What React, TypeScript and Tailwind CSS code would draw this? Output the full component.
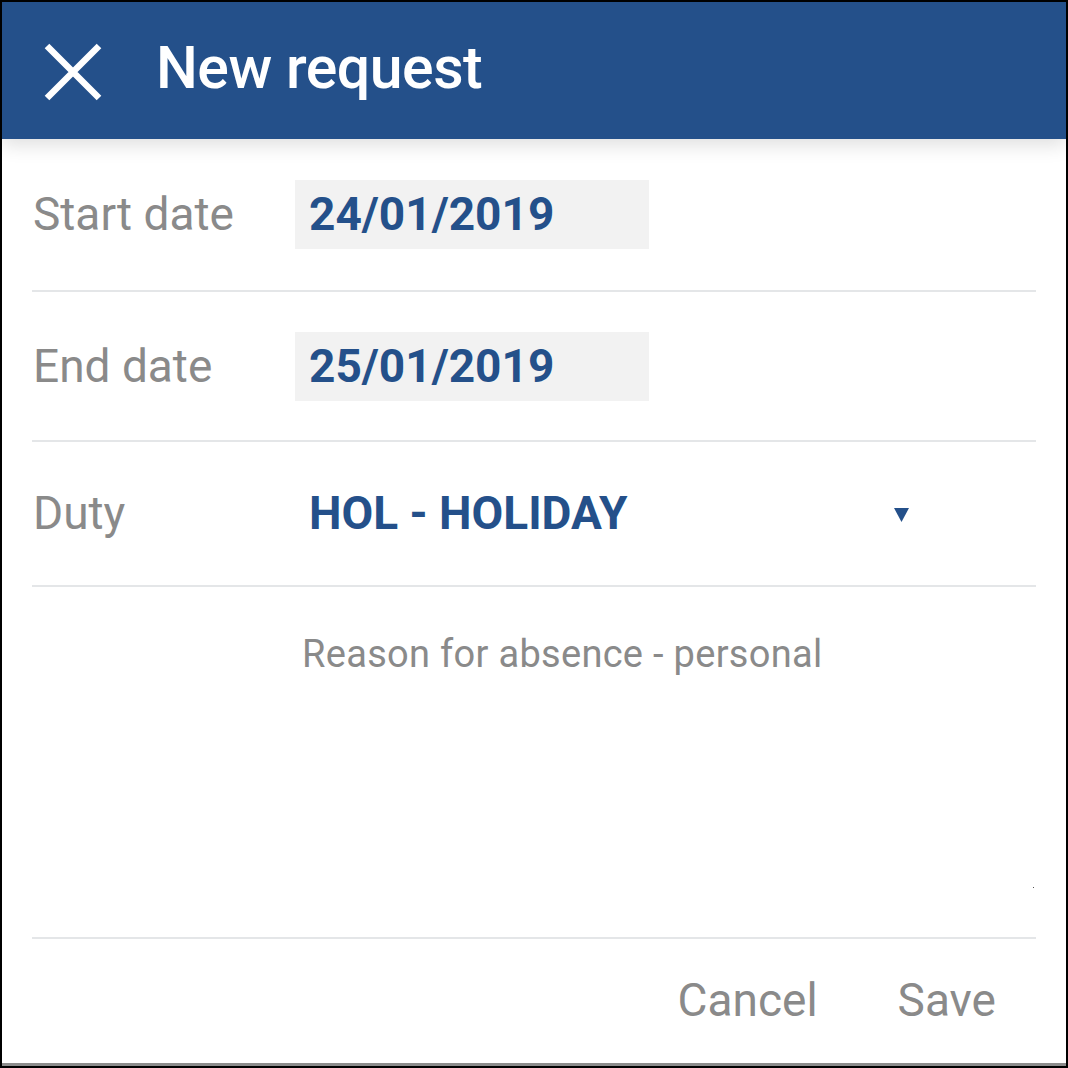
import React from "react";

const BLUE = "#24508a";

const Divider = () => <div className="h-[2px] bg-[#e4e6e8]" />;

const DateField = ({ label, value, h }: { label: string; value: string; h: string }) => (
  <div className={`flex items-center ${h}`}>
    <div className="w-[263px] pl-[1px] text-[46px] text-[#8a8a8a]">{label}</div>
    <div className="flex h-[69px] w-[354px] items-center bg-[#f2f2f2] pl-[14px] text-[46px] font-bold text-[#24508a]">
      {value}
    </div>
  </div>
);

export default function App() {
  return (
    <div
      className="relative flex h-[1068px] w-[1068px] flex-col overflow-hidden border-x-2 border-t-2 border-black bg-white"
      style={{ fontFamily: "Roboto, 'Noto Sans', sans-serif" }}
    >
      {/* header */}
      <div
        className="relative z-10 flex h-[137px] shrink-0 items-center shadow-[0_6px_18px_rgba(0,0,0,0.13)]"
        style={{ backgroundColor: BLUE }}
      >
        <svg className="ml-[42px] mt-[2px] h-[58px] w-[58px]" viewBox="0 0 58 58">
          <path d="M3 3L55 55M55 3L3 55" stroke="white" strokeWidth="6.5" />
        </svg>
        <h1 className="ml-[54px] mt-[-6px] text-[59px] font-medium leading-none tracking-[-0.5px] text-white">
          New request
        </h1>
      </div>

      {/* form */}
      <div className="flex flex-1 flex-col px-[30px]">
        <DateField label="Start date" value="24/01/2019" h="h-[151px]" />
        <Divider />
        <DateField label="End date" value="25/01/2019" h="h-[148px]" />
        <Divider />
        <div className="flex h-[143px] items-center">
          <div className="w-[277px] pl-[1px] text-[46px] text-[#8a8a8a]">Duty</div>
          <div className="flex-1 text-[46px] font-bold text-[#24508a]">HOL - HOLIDAY</div>
          <svg className="mr-[127px] mt-[2px] h-[14px] w-[15px]" viewBox="0 0 15 14">
            <path d="M0 0H15L7.5 14Z" fill={BLUE} />
          </svg>
        </div>
        <Divider />
        <div className="relative h-[350px]">
          <p className="pl-[270px] pt-[43px] text-[38px] leading-[48px] tracking-[0.3px] text-[#8a8a8a]">
            Reason for absence - personal
          </p>
          <span className="absolute right-[2px] top-[300px] h-[1px] w-[1px] bg-[#555]" />
        </div>
        <Divider />
        <div className="flex flex-1 items-center justify-end gap-[80px] pb-[2px] pr-[40px] text-[46px] text-[#8a8a8a]">
          <button>Cancel</button>
          <button>Save</button>
        </div>
      </div>
      <div className="h-[3px] shrink-0 bg-[#8c8c8c]" />
      <div className="h-[2px] shrink-0 bg-black" />
    </div>
  );
}
